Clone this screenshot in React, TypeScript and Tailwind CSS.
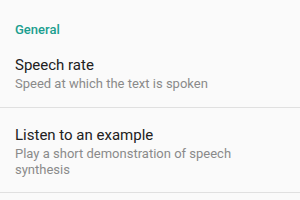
import React from "react";

export default function App() {
  const font = { fontFamily: "Roboto, 'Noto Sans', sans-serif" };
  return (
    <div className="w-[300px] h-[200px] bg-[#fafafa] overflow-hidden" style={font}>
      <div className="pl-[15px] pt-[22px] text-[13px] leading-[16px] font-medium text-[#1a9e8f]">
        General
      </div>
      <div className="pl-[15px] pr-4 pt-[17px] pb-[14px] border-b border-[#e0e0e0]">
        <div className="text-[15px] leading-[20px] text-[#212121]">Speech rate</div>
        <div className="text-[13px] leading-[18px] text-[#8a8a8a]">Speed at which the text is spoken</div>
      </div>
      <div className="pl-[15px] pr-4 pt-[17px] pb-[14px] border-b border-[#e0e0e0]">
        <div className="text-[15px] leading-[20px] text-[#212121] mb-[1px]">Listen to an example</div>
        <div className="text-[13px] leading-[16px] text-[#8a8a8a] w-[240px]">
          Play a short demonstration of speech synthesis
        </div>
      </div>
    </div>
  );
}
